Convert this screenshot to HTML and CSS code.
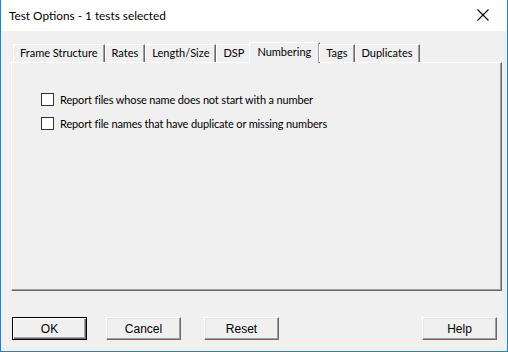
FILE: index.html
```html
<!doctype html>
<html lang="en-US">

<head>
    <meta charset="utf-8" />
    <title>Test Options</title>

    <link rel="stylesheet" href="styles.css">
</head>

<body>
    <div class="window">
        <div class="titlebar">
            <span class="title">Test Options - 1 tests selected</span>
            <svg class="close" width="12" height="12" viewBox="0 0 12 12">
                <path d="M0.5 0.5 L11.5 11.5 M11.5 0.5 L0.5 11.5" stroke="#000" stroke-width="1.1" fill="none" />
            </svg>
        </div>

        <div class="content">
            <div class="tabs">
                <div class="tab">Frame Structure</div>
                <div class="tab">Rates</div>
                <div class="tab">Length/Size</div>
                <div class="tab">DSP</div>
                <div class="tab selected">Numbering</div>
                <div class="tab">Tags</div>
                <div class="tab">Duplicates</div>
            </div>

            <div class="panel">
                <label class="check">
                    <span class="box"></span>
                    Report files whose name does not start with a number
                </label>
                <label class="check">
                    <span class="box"></span>
                    Report file names that have duplicate or missing numbers
                </label>
            </div>

            <div class="buttons">
                <div class="button default">OK</div>
                <div class="button">Cancel</div>
                <div class="button reset">Reset</div>
                <div class="spacer"></div>
                <div class="button">Help</div>
            </div>
        </div>
    </div>
</body>

</html>
```

FILE: styles.css
```css
html, body {
    margin: 0;
    padding: 0;
}

body {
    width: 508px;
    height: 352px;
    font-family: Lato, "Liberation Sans", sans-serif;
    font-size: 11px;
    color: #000;
}

.window {
    box-sizing: border-box;
    width: 508px;
    height: 352px;
    display: flex;
    flex-direction: column;
    background-color: #f0f0f0;
    border: 1px solid #1883d7;
    border-top: none;
}

.titlebar {
    height: 31px;
    flex-shrink: 0;
    background-color: #fff;
    display: flex;
    align-items: center;
    justify-content: space-between;
    padding: 0 18px 0 8px;
}

.title {
    font-size: 11.8px;
    margin-top: -1px;
}

.close {
    display: block;
    margin-top: -1px;
}

.content {
    flex: 1;
    display: flex;
    flex-direction: column;
    padding: 11px 5px 0 10px;
}

.tabs {
    display: flex;
    align-items: flex-end;
    height: 20px;
    padding-left: 2px;
    position: relative;
    z-index: 1;
}

.tab {
    box-sizing: border-box;
    height: 18px;
    line-height: 16px;
    padding: 0 6px 0 6px;
    border-top: 1px solid #fff;
    border-left: 1px solid #fff;
    border-right: 1px solid #696969;
    box-shadow: inset -1px 0 0 #a0a0a0;
    white-space: nowrap;
}

.tab.selected {
    height: 21px;
    margin: 0 -1px -1px -2px;
    padding: 0 8px 0 7px;
    line-height: 18px;
    background-color: #f0f0f0;
}

.panel {
    box-sizing: border-box;
    height: 229px;
    border-top: 1px solid #fff;
    border-left: 1px solid #fff;
    border-right: 1px solid #696969;
    border-bottom: 1px solid #696969;
    box-shadow: inset -1px -1px 0 #a0a0a0;
    padding: 30px 0 0 29px;
    display: flex;
    flex-direction: column;
    gap: 11px;
}

.check {
    display: flex;
    align-items: center;
    gap: 6px;
    height: 13px;
    letter-spacing: -0.15px;
}

.box {
    box-sizing: border-box;
    width: 13px;
    height: 13px;
    border: 1px solid #333;
    background-color: #fff;
    flex-shrink: 0;
}

.buttons {
    display: flex;
    gap: 19px;
    padding: 26px 0 0 1px;
}

.button.reset {
    margin-left: 4px;
}

.spacer {
    flex: 1;
}

.button {
    box-sizing: border-box;
    width: 75px;
    height: 23px;
    border-top: 1px solid #fff;
    border-left: 1px solid #fff;
    border-right: 1px solid #696969;
    border-bottom: 1px solid #696969;
    box-shadow: inset -1px -1px 0 #a0a0a0, inset 1px 1px 0 #e3e3e3;
    background-color: #f0f0f0;
    font-family: "Liberation Sans", sans-serif;
    font-size: 12px;
    display: flex;
    align-items: center;
    justify-content: center;
}

.button.default {
    border: 1px solid #000;
    box-shadow: inset 1px 1px 0 #fff, inset -1px -1px 0 #696969, inset -2px -2px 0 #a0a0a0;
}

.buttons .button:last-child {
    margin-right: 5px;
}
```
